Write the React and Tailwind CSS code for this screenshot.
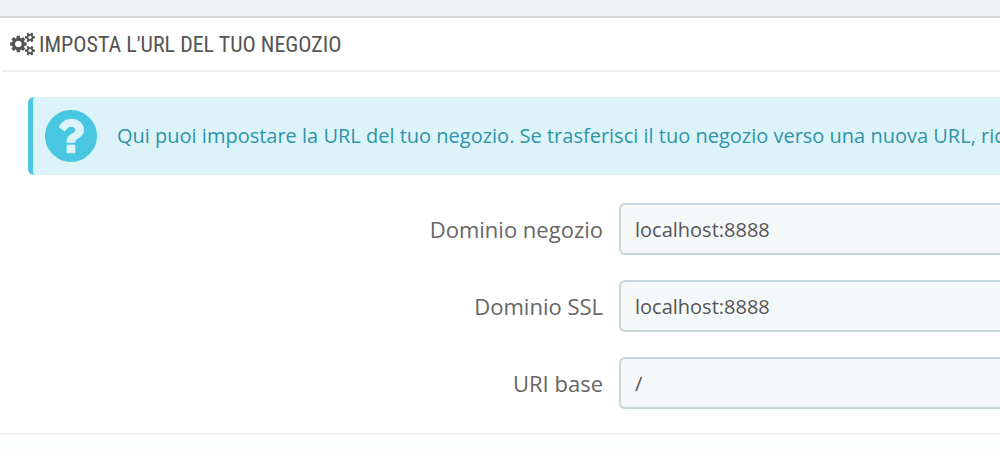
import React, { useState } from 'react';

const FIELDS = [
  { id: 'domain', label: 'Dominio negozio', value: 'localhost:8888' },
  { id: 'domain_ssl', label: 'Dominio SSL', value: 'localhost:8888' },
  { id: 'base_uri', label: 'URI base', value: '/' },
];

const CogsIcon = ({ className }) => (
  <svg viewBox="0 0 1920 1792" className={className} fill="currentColor" aria-hidden="true">
    <path d="M896 896q0-106-75-181t-181-75-181 75-75 181 75 181 181 75 181-75 75-181zm768 512q0-52-38-90t-90-38-90 38-38 90q0 53 37.5 90.5t90.5 37.5 90.5-37.5 37.5-90.5zm0-1024q0-52-38-90t-90-38-90 38-38 90q0 53 37.5 90.5t90.5 37.5 90.5-37.5 37.5-90.5zm-384 421v185q0 10-7 19.5t-16 10.5l-155 24q-11 35-32 76 34 48 90 115 7 11 7 20 0 12-7 19-23 30-82.5 89.5t-78.5 59.5q-11 0-21-7l-115-90q-37 19-77 31-11 108-23 155-7 24-30 24h-186q-11 0-20-7.5t-10-17.5l-23-153q-34-10-75-31l-118 89q-7 7-20 7-11 0-21-8-144-133-144-160 0-9 7-19 10-14 41-53t47-61q-23-44-35-82l-152-24q-10-1-17-9.5t-7-19.5v-185q0-10 7-19.5t16-10.5l155-24q11-35 32-76-34-48-90-115-7-11-7-20 0-12 7-20 22-30 82-89t79-59q11 0 21 7l115 90q34-18 77-32 11-108 23-154 7-24 30-24h186q11 0 20 7.5t10 17.5l23 153q34 10 75 31l118-89q8-7 20-7 11 0 21 8 144 133 144 160 0 8-7 19-12 16-42 54t-45 60q23 48 34 82l152 23q10 2 17 10.5t7 19.5zm640 533v140q0 16-149 31-12 27-30 52 51 113 51 138 0 4-4 7-122 71-124 71-8 0-46-47t-52-68q-20 2-30 2t-30-2q-14 21-52 68t-46 47q-2 0-124-71-4-3-4-7 0-25 51-138-18-25-30-52-149-15-149-31v-140q0-16 149-31 13-29 30-52-51-113-51-138 0-4 4-7 4-2 35-20t59-34 30-16q8 0 46 46.5t52 67.5q20-2 30-2t30 2q51-71 92-112l6-2q4 0 124 70 4 3 4 7 0 25-51 138 17 23 30 52 149 15 149 31zm0-1024v140q0 16-149 31-12 27-30 52 51 113 51 138 0 4-4 7-122 71-124 71-8 0-46-47t-52-68q-20 2-30 2t-30-2q-14 21-52 68t-46 47q-2 0-124-71-4-3-4-7 0-25 51-138-18-25-30-52-149-15-149-31v-140q0-16 149-31 13-29 30-52-51-113-51-138 0-4 4-7 4-2 35-20t59-34 30-16q8 0 46 46.5t52 67.5q20-2 30-2t30 2q51-71 92-112l6-2q4 0 124 70 4 3 4 7 0 25-51 138 17 23 30 52 149 15 149 31z" />
  </svg>
);

const QuestionCircleIcon = ({ className }) => (
  <svg viewBox="128 128 1536 1536" className={className} fill="currentColor" aria-hidden="true">
    <path d="M1024 1376v-192q0-14-9-23t-23-9h-192q-14 0-23 9t-9 23v192q0 14 9 23t23 9h192q14 0 23-9t9-23zm256-672q0-88-55.5-163t-138.5-116-170-41q-243 0-371 222-15 24 8 42l132 100q7 6 19 6 16 0 25-12 53-68 86-92 34-24 86-24 48 0 85.5 26t37.5 59q0 38-20 61t-68 45q-63 28-115.5 86.5t-52.5 125.5v36q0 14 9 23t23 9h192q14 0 23-9t9-23q0-19 21.5-49.5t54.5-49.5q32-18 49-28.5t46-35 44.5-48 28-60.5 12.5-81zm384 192q0 209-103 385.5t-279.5 279.5-385.5 103-385.5-103-279.5-279.5-103-385.5 103-385.5 279.5-279.5 385.5-103 385.5 103 279.5 279.5 103 385.5z" />
  </svg>
);

const Field = ({ id, label, value }) => {
  const [text, setText] = useState(value);

  return (
    <div className="grid grid-cols-[minmax(0,575px)_1fr] items-center gap-4">
      <label htmlFor={id} className="text-right text-[22px] leading-8 text-[#666]">
        {label}
      </label>
      <input
        id={id}
        type="text"
        value={text}
        onChange={(e) => setText(e.target.value)}
        className="h-[52px] w-full min-w-0 rounded-l-md border-2 border-r-0 border-[#c7d6db] bg-[#f5f8f9] px-3.5 text-xl text-[#555] outline-none focus:border-[#66afe9]"
      />
    </div>
  );
};

const App = () => (
  <div className="flex min-h-screen flex-col overflow-hidden bg-[#eff1f2] pt-4 font-['Open_Sans',sans-serif]">
    <form className="flex grow flex-col border-t-2 border-[#d3d8db] bg-white">
      <h3 className="ml-0.5 flex h-[54px] items-center gap-1 border-b-2 border-[#eee] pl-2 font-['Ubuntu_Condensed','Noto_Sans_ExtraCondensed','Noto_Sans_Condensed','Roboto_Condensed',sans-serif] text-[22px] font-normal text-[#555] uppercase">
        <CogsIcon className="h-6 w-[25px]" />
        Imposta l'URL del tuo negozio
      </h3>

      <div className="mt-[25px] ml-7 flex h-[78px] items-center gap-5 overflow-hidden rounded-l-md border-l-[5px] border-[#4ac7e0] bg-[#dcf4f9] pl-3 text-xl whitespace-nowrap text-[#2f93a9]">
        <QuestionCircleIcon className="size-[52px] shrink-0 text-[#4ac7e0]" />
        <p>Qui puoi impostare la URL del tuo negozio. Se trasferisci il tuo negozio verso una nuova URL, ric</p>
      </div>

      <div className="mt-7 mb-6 ml-7 flex flex-col gap-[25px]">
        {FIELDS.map((field) => (
          <Field key={field.id} {...field} />
        ))}
      </div>

      <div className="grow border-t-2 border-[#eee] bg-[#fcfdfe]" />
    </form>
  </div>
);

export default App;
